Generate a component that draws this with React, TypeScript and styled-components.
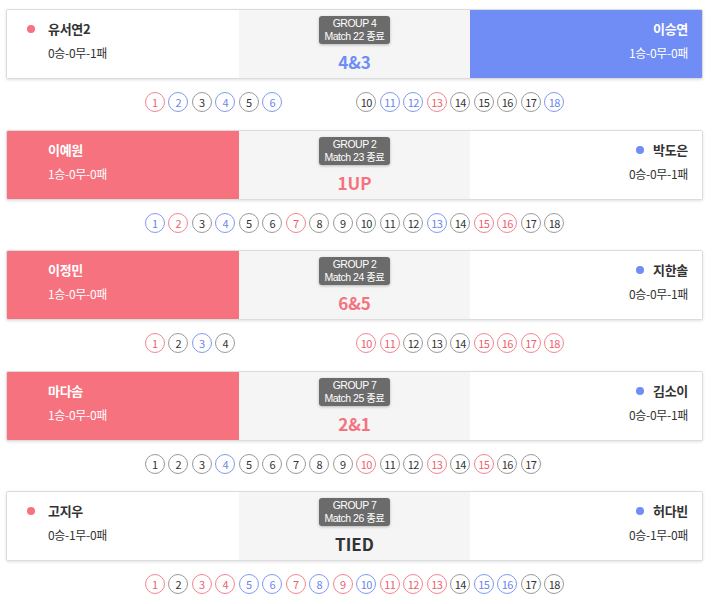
import React from "react";
import styled, { createGlobalStyle, css } from "styled-components";

const RED = "#f6727e";
const BLUE = "#6f8df5";

const Global = createGlobalStyle`
  html, body { margin: 0; padding: 0; background: #fff; }
  body { font-family: "Noto Sans CJK KR", "Noto Sans", sans-serif; color: #333; }
`;

type Side = "red" | "blue";
type HoleColor = "r" | "b" | "g" | "x";

const Page = styled.div`
  width: 697px;
  margin-left: 6px;
  padding-top: 9px;
`;

const Match = styled.section`
  display: flex;
  flex-direction: column;
`;

const Card = styled.div`
  display: grid;
  grid-template-columns: 232px 1fr 232px;
  height: 70px;
  box-sizing: border-box;
  border: 1px solid #dcdcdc;
  border-radius: 2px;
  background: #fff;
  box-shadow: 0 1px 3px rgba(0, 0, 0, 0.12);
  overflow: hidden;
`;

const Player = styled.div<{ $align: "left" | "right"; $win?: Side }>`
  display: flex;
  flex-direction: column;
  align-items: ${(p) => (p.$align === "left" ? "flex-start" : "flex-end")};
  padding: ${(p) => (p.$align === "left" ? "10px 0 0 41px" : "10px 14px 0 0")};
  background: ${(p) => (p.$win === "red" ? RED : p.$win === "blue" ? BLUE : "#fff")};
  color: ${(p) => (p.$win ? "#fff" : "#333")};
`;

const Name = styled.div<{ $dot?: Side; $align: "left" | "right" }>`
  position: relative;
  font-size: 13px;
  font-weight: 700;
  line-height: 18px;
  letter-spacing: -0.3px;
  ${(p) =>
    p.$dot &&
    css`
      &::before {
        content: "";
        position: absolute;
        top: 5px;
        ${p.$align === "left" ? "left: -21px;" : "left: -17px;"}
        width: 8px;
        height: 8px;
        border-radius: 50%;
        background: ${p.$dot === "red" ? RED : BLUE};
      }
    `}
`;

const Record = styled.div`
  margin-top: 6px;
  font-size: 12px;
  line-height: 18px;
  letter-spacing: -0.3px;
`;

const Center = styled.div`
  display: flex;
  flex-direction: column;
  align-items: center;
  padding-top: 6px;
  background: #f5f5f5;
`;

const Badge = styled.div`
  display: flex;
  flex-direction: column;
  align-items: center;
  background: #6b6b6b;
  color: #fff;
  font-family: "Liberation Sans", "Noto Sans CJK KR", sans-serif;
  font-size: 10.5px;
  letter-spacing: -0.5px;
  padding: 1px 6px;
  border-radius: 3px;
  box-shadow: 0 1px 3px rgba(0, 0, 0, 0.25);
`;

const BadgeLine = styled.span`
  display: block;
  line-height: 13px;
  white-space: nowrap;
`;

const Score = styled.div<{ $c: "red" | "blue" | "dark" }>`
  margin-top: 8px;
  font-size: 17px;
  font-weight: 700;
  line-height: 20px;
  color: ${(p) => (p.$c === "red" ? RED : p.$c === "blue" ? BLUE : "#333")};
`;

const Holes = styled.div`
  display: flex;
  justify-content: center;
  gap: 3.5px;
  margin: 13px 0 17.5px;
`;

const Hole = styled.span<{ $c: HoleColor }>`
  width: 20px;
  height: 20px;
  box-sizing: border-box;
  border-radius: 50%;
  display: flex;
  align-items: center;
  justify-content: center;
  font-size: 11px;
  letter-spacing: -0.5px;
  border: 1px solid
    ${(p) => (p.$c === "r" ? "#f2858f" : p.$c === "b" ? "#8199f2" : "#9a9a9a")};
  color: ${(p) => (p.$c === "r" ? "#ee5f6d" : p.$c === "b" ? "#6a86ee" : "#333")};
  visibility: ${(p) => (p.$c === "x" ? "hidden" : "visible")};
`;

interface P {
  name: string;
  record: string;
}
interface M {
  left: P;
  right: P;
  winner: Side | null;
  group: string;
  match: string;
  score: string;
  holes: string;
}

const matches: M[] = [
  {
    left: { name: "유서연2", record: "0승-0무-1패" },
    right: { name: "이승연", record: "1승-0무-0패" },
    winner: "blue",
    group: "GROUP 4",
    match: "Match 22 종료",
    score: "4&3",
    holes: "rbgbgbxxxgbbrggggb",
  },
  {
    left: { name: "이예원", record: "1승-0무-0패" },
    right: { name: "박도은", record: "0승-0무-1패" },
    winner: "red",
    group: "GROUP 2",
    match: "Match 23 종료",
    score: "1UP",
    holes: "brgbggrgggggbgrrgg",
  },
  {
    left: { name: "이정민", record: "1승-0무-0패" },
    right: { name: "지한솔", record: "0승-0무-1패" },
    winner: "red",
    group: "GROUP 2",
    match: "Match 24 종료",
    score: "6&5",
    holes: "rgbgxxxxxrrgggrrrr",
  },
  {
    left: { name: "마다솜", record: "1승-0무-0패" },
    right: { name: "김소이", record: "0승-0무-1패" },
    winner: "red",
    group: "GROUP 7",
    match: "Match 25 종료",
    score: "2&1",
    holes: "gggbgggggrggrgrggx",
  },
  {
    left: { name: "고지우", record: "0승-1무-0패" },
    right: { name: "허다빈", record: "0승-1무-0패" },
    winner: null,
    group: "GROUP 7",
    match: "Match 26 종료",
    score: "TIED",
    holes: "rgrrbbrbrbrrrgbbgg",
  },
];

export default function App() {
  return (
    <>
      <Global />
      <Page>
        {matches.map((m, i) => (
          <Match key={i}>
            <Card>
              <Player $align="left" $win={m.winner === "red" ? "red" : undefined}>
                <Name $align="left" $dot={m.winner === "red" ? undefined : "red"}>
                  {m.left.name}
                </Name>
                <Record>{m.left.record}</Record>
              </Player>
              <Center>
                <Badge>
                  <BadgeLine>{m.group}</BadgeLine>
                  <BadgeLine>{m.match}</BadgeLine>
                </Badge>
                <Score $c={m.winner ?? "dark"}>{m.score}</Score>
              </Center>
              <Player $align="right" $win={m.winner === "blue" ? "blue" : undefined}>
                <Name $align="right" $dot={m.winner === "blue" ? undefined : "blue"}>
                  {m.right.name}
                </Name>
                <Record>{m.right.record}</Record>
              </Player>
            </Card>
            <Holes>
              {m.holes.split("").map((c, h) => (
                <Hole key={h} $c={c as HoleColor}>
                  {h + 1}
                </Hole>
              ))}
            </Holes>
          </Match>
        ))}
      </Page>
    </>
  );
}
